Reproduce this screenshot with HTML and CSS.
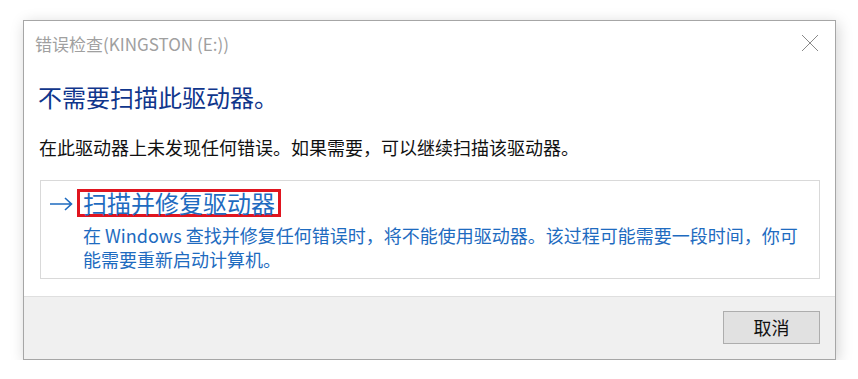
FILE: index.html
```html
<!DOCTYPE html>
<html lang="zh-CN">
<head>
<meta charset="utf-8">
<title>错误检查</title>
<link rel="stylesheet" href="styles.css">
</head>
<body>
<div class="window">
  <div class="titlebar">
    <span class="title">错误检查(KINGSTON (E:))</span>
    <svg class="close" width="18" height="18" viewBox="0 0 18 18"><path d="M1 1 L17 17 M17 1 L1 17" stroke="#8a8a8a" stroke-width="1" fill="none"/></svg>
  </div>
  <div class="content">
    <h1 class="heading">不需要扫描此驱动器。</h1>
    <p class="message">在此驱动器上未发现任何错误。如果需要，可以继续扫描该驱动器。</p>
    <div class="cmdlink">
      <div class="arrow">
        <svg width="24" height="14" viewBox="0 0 24 14"><path d="M1 7 H22.5 M16 1 L22.5 7 L16 13" stroke="#1e6bc0" stroke-width="1.6" fill="none"/></svg>
      </div>
      <div class="cmdbody">
        <div class="cmdtitle"><span class="mark">扫描并修复驱动器</span></div>
        <div class="cmddesc">在 Windows 查找并修复任何错误时，将不能使用驱动器。该过程可能需要一段时间，你可能需要重新启动计算机。</div>
      </div>
    </div>
  </div>
  <div class="footer">
    <button class="btn">取消</button>
  </div>
</div>
</body>
</html>
```
FILE: styles.css
```css
html, body {
  margin: 0;
  padding: 0;
  background: #ffffff;
}
body {
  font-family: "Noto Sans CJK SC", "Noto Sans", sans-serif;
  padding: 20px 0 0 23px;
}
.window {
  width: 811px;
  height: 338px;
  border: 1px solid #a6a6a6;
  background: #ffffff;
  box-shadow: 2px 3px 14px rgba(0, 0, 0, 0.18);
  display: flex;
  flex-direction: column;
}
.titlebar {
  height: 46px;
  display: flex;
  align-items: center;
  justify-content: space-between;
  padding: 0 16px 0 11px;
}
.title {
  font-size: 17px;
  line-height: 46px;
  color: #a0a0a0;
}
.close {
  display: block;
  margin-top: -2px;
}
.content {
  flex: 1;
  padding: 0 15px 0 14px;
}
.heading {
  margin: 15px 0 0 0;
  font-size: 24px;
  line-height: 30px;
  font-weight: normal;
  color: #10368c;
}
.message {
  margin: 22px 0 0 1px;
  font-size: 18px;
  line-height: 26px;
  color: #111111;
}
.cmdlink {
  margin: 20px 0 0 2px;
  border: 1px solid #d9d9d9;
  padding: 8px 10px 7px 8px;
  display: flex;
}
.arrow {
  width: 28px;
  height: 28px;
  display: flex;
  align-items: center;
}
.arrow svg {
  display: block;
  margin-top: 1px;
}
.cmdbody {
  flex: 1;
}
.cmdtitle {
  height: 28px;
}
.mark {
  display: inline-block;
  font-size: 24px;
  line-height: 22px;
  color: #1e6bc0;
  border: 3px solid #e0151f;
  padding: 0 3px;
}
.cmddesc {
  margin-top: 6px;
  padding-left: 6px;
  font-size: 18px;
  line-height: 24px;
  color: #1e6bc0;
}
.footer {
  height: 63px;
  border-top: 1px solid #dfdfdf;
  background: #f0f0f0;
  display: flex;
  justify-content: flex-end;
  align-items: flex-start;
  padding: 14px 15px 0 0;
  box-sizing: border-box;
}
.btn {
  width: 97px;
  height: 33px;
  border: 1px solid #adadad;
  background: #e1e1e1;
  font-family: "Noto Sans CJK SC", "Noto Sans", sans-serif;
  font-size: 18px;
  line-height: 31px;
  padding: 0;
  color: #111111;
}
```
